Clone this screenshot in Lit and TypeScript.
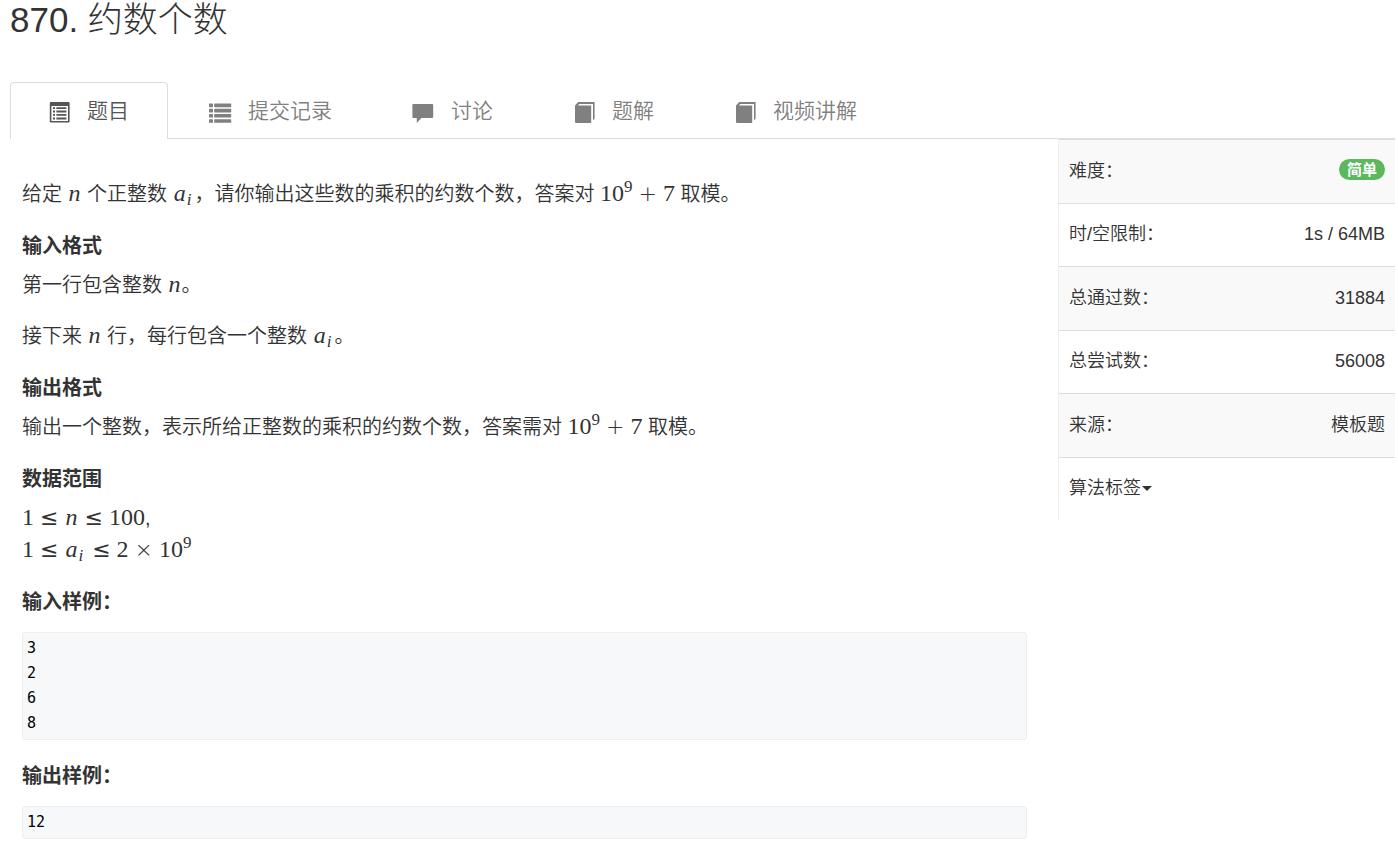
import { LitElement, html, css, svg, type TemplateResult, type SVGTemplateResult } from "lit";
import { customElement, state } from "lit/decorators.js";

interface Tab {
  label: string;
  icon: SVGTemplateResult;
}

const bookIcon = svg`
  <path d="M1 8.4 L4.2 5 H20.6 V21.4 L19 23.4 V7 H5.2 L4 8.4 H17.2 V26 H2 Q1 26 1 25 Z" />`;

const tabs: Tab[] = [
  {
    label: "题目",
    icon: svg`
      <path fill-rule="evenodd" d="M1.8 5 H19.6 Q20.6 5 20.6 6 V24.6 Q20.6 25.6 19.6 25.6 H1.8 Q0.8 25.6 0.8 24.6 V6 Q0.8 5 1.8 5 Z M2.4 9 V24 H19 V9 Z" />
      <path d="M4 10.2h2v1.8h-2z M7.4 10.2h10v1.8h-10z M4 13.6h2v1.8h-2z M7.4 13.6h10v1.8h-10z M4 17h2v1.8h-2z M7.4 17h10v1.8h-10z M4 20.6h2v1.8h-2z M7.4 20.6h10v1.8h-10z" />`,
  },
  {
    label: "提交记录",
    icon: svg`
      <rect x="-1" y="6.6" width="4" height="3.6" rx="0.6" /><rect x="4.2" y="6.6" width="17" height="3.6" rx="0.6" />
      <rect x="-1" y="11.8" width="4" height="3.6" rx="0.6" /><rect x="4.2" y="11.8" width="17" height="3.6" rx="0.6" />
      <rect x="-1" y="17" width="4" height="3.6" rx="0.6" /><rect x="4.2" y="17" width="17" height="3.6" rx="0.6" />
      <rect x="-1" y="22.2" width="4" height="3.6" rx="0.6" /><rect x="4.2" y="22.2" width="17" height="3.6" rx="0.6" />`,
  },
  {
    label: "讨论",
    icon: svg`
      <path d="M0.4 7 H19.2 Q20.2 7 20.2 8 V20 Q20.2 21 19.2 21 H8.4 L3.8 26 V21 H0.4 Q-0.6 21 -0.6 20 V8 Q-0.6 7 0.4 7 Z" />`,
  },
  { label: "题解", icon: bookIcon },
  { label: "视频讲解", icon: bookIcon },
];

const n = html`<span class="math"><i>n</i></span>`;
const ai = html`<span class="math"><i>a</i><sub><i>i</i></sub></span>`;
const tenPow9 = html`10<sup>9</sup>`;
const modulus = html`<span class="math">${tenPow9}<span class="op">+</span>7</span>`;
const le = html`<span class="op rel">≤</span>`;

const facts: Array<[string, string | TemplateResult]> = [
  ["难度：", html`<span class="badge">简单</span>`],
  ["时/空限制：", "1s / 64MB"],
  ["总通过数：", "31884"],
  ["总尝试数：", "56008"],
  ["来源：", "模板题"],
];

@customElement("app-root")
export class AppRoot extends LitElement {
  @state() private active = 0;

  static styles = css`
    :host {
      display: block;
      padding: 0 3px 0 10px;
      color: #333;
      background: #fff;
      font-family: "Liberation Sans", "Noto Sans CJK SC", sans-serif;
      font-size: 20px;
      line-height: 32px;
    }
    .title {
      margin: 0 0 42px;
      font-size: 35px;
      font-weight: 300;
      line-height: 40px;
    }
    .tabs {
      display: flex;
      gap: 3px;
      border-bottom: 1px solid #ddd;
    }
    .tab {
      display: flex;
      align-items: center;
      gap: 16px;
      margin-bottom: -1px;
      padding: 13px 38px;
      border: 1px solid transparent;
      border-bottom: 0;
      border-radius: 4px 4px 0 0;
      color: #808080;
      font-size: 21px;
      font-weight: 350;
      line-height: 30px;
      text-decoration: none;
    }
    .tab.active {
      border-color: #ddd;
      background: #fff;
      color: #555;
    }
    .icon {
      width: 22px;
      height: 28px;
      overflow: visible;
      fill: currentColor;
    }
    .columns {
      display: grid;
      grid-template-columns: minmax(0, 1fr) 337px;
      align-items: start;
    }
    .statement {
      padding: 39px 31px 0 12px;
      font-weight: 350;
    }
    p {
      margin: 0 0 19px;
    }
    h2 {
      margin: 25px 0 12px;
      font-size: 20px;
      font-weight: 700;
      line-height: 22px;
    }
    pre {
      margin: 19px 0 25px;
      padding: 3px 4px;
      border: 1px solid #eee;
      border-radius: 3px;
      background: #f6f8fa;
      color: #000;
      font-family: "DejaVu Sans Mono", monospace;
      font-size: 15px;
      font-weight: 400;
      line-height: 25px;
    }
    .math {
      font-family: "Liberation Serif", serif;
      font-size: 24px;
      font-weight: 400;
      line-height: 0;
      white-space: nowrap;
    }
    .math i {
      padding: 0 1px;
    }
    .math sup,
    .math sub {
      font-size: 17px;
      line-height: 0;
    }
    .math sup {
      vertical-align: 9px;
    }
    .math sub {
      padding-right: 3px;
      vertical-align: -4px;
    }
    .math sub i {
      padding: 0;
    }
    .op {
      margin: 0 6px;
      font-family: "DejaVu Sans", sans-serif;
      font-size: 22px;
      font-weight: 200;
    }
    .rel {
      font-weight: 400;
    }
    .info {
      border-left: 1px solid #eee;
    }
    table {
      width: 100%;
      border-collapse: separate;
      border-spacing: 0;
      font-size: 18px;
      line-height: 25px;
    }
    th,
    td {
      padding: 19px 10px;
      border-top: 1px solid #ddd;
      font-weight: 350;
      text-align: left;
    }
    td {
      text-align: right;
    }
    tr:nth-child(odd) > * {
      background: #f9f9f9;
    }
    tr:nth-child(even) > * {
      padding-top: 18px;
      background: #fff;
    }
    .badge {
      display: inline-block;
      padding: 0 8px;
      border-radius: 11px;
      background: #5cb85c;
      color: #fff;
      font-size: 15px;
      font-weight: 700;
      line-height: 21px;
      vertical-align: top;
    }
    .dropdown {
      display: inline-flex;
      align-items: center;
      gap: 1px;
      padding: 0;
      border: 0;
      background: none;
      color: inherit;
      font: inherit;
      cursor: pointer;
    }
    .caret {
      border-top: 5px solid currentColor;
      border-right: 5px solid transparent;
      border-left: 5px solid transparent;
    }
  `;

  private select(event: Event, index: number) {
    event.preventDefault();
    this.active = index;
  }

  render() {
    return html`
      <div lang="zh-CN">
        <h1 class="title">870. 约数个数</h1>
        <nav class="tabs">
          ${tabs.map(
            (tab, index) => html`
              <a
                class=${index === this.active ? "tab active" : "tab"}
                href="#"
                @click=${(event: Event) => this.select(event, index)}
                ><svg class="icon" viewBox="0 0 22 28" aria-hidden="true">${tab.icon}</svg>${tab.label}</a
              >
            `,
          )}
        </nav>
        <div class="columns">
          <main class="statement">
            <p>给定 ${n} 个正整数 ${ai}，请你输出这些数的乘积的约数个数，答案对 ${modulus} 取模。</p>
            <h2>输入格式</h2>
            <p>第一行包含整数 ${n}。</p>
            <p>接下来 ${n} 行，每行包含一个整数 ${ai}。</p>
            <h2>输出格式</h2>
            <p>输出一个整数，表示所给正整数的乘积的约数个数，答案需对 ${modulus} 取模。</p>
            <h2>数据范围</h2>
            <p>
              <span class="math">1${le}<i>n</i>${le}100</span>,<br />
              <span class="math">1${le}<i>a</i><sub><i>i</i></sub>${le}2<span class="op">×</span>${tenPow9}</span>
            </p>
            <h2>输入样例：</h2>
            <pre>${"3\n2\n6\n8"}</pre>
            <h2>输出样例：</h2>
            <pre>12</pre>
          </main>
          <aside class="info">
            <table>
              <tbody>
                ${facts.map(([name, value]) => html`<tr><th scope="row">${name}</th><td>${value}</td></tr>`)}
                <tr>
                  <th colspan="2"><button class="dropdown" type="button">算法标签<span class="caret"></span></button></th>
                </tr>
              </tbody>
            </table>
          </aside>
        </div>
      </div>
    `;
  }
}
